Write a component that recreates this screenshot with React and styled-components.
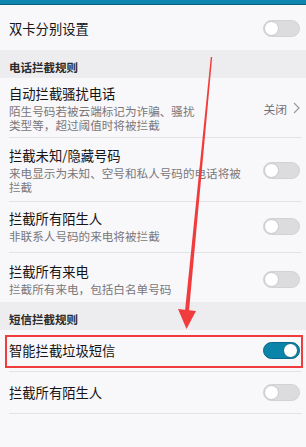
import React from "react";
import styled, { createGlobalStyle } from "styled-components";

const Global = createGlobalStyle`
  html, body { margin: 0; padding: 0; background: #f8f7fa; }
  body { font-family: "Noto Sans CJK SC", "Noto Sans", sans-serif; }
  * { box-sizing: border-box; }
`;

const Page = styled.div`
  position: relative;
  width: 306px;
  height: 447px;
  overflow: hidden;
  background: #f8f7fa;
  display: flex;
  flex-direction: column;
`;

const TopBar = styled.div`
  height: 5px;
  background: #0d86b0;
  border-bottom: 1px solid #075f80;
  flex: none;
`;

const Row = styled.div`
  display: flex;
  align-items: center;
  justify-content: space-between;
  margin: 0 4px 0 9px;
  padding: ${(p) => p.$pad || "0"};
  padding-right: 2px;
  min-height: ${(p) => p.$h || 0}px;
  border-bottom: ${(p) => (p.$divider ? "1px solid #e3e2e6" : "none")};
  flex: none;
`;

const TextCol = styled.div`
  display: flex;
  flex-direction: column;
  max-width: ${(p) => p.$w || 240}px;
`;

const Title = styled.div`
  font-size: 13.3px;
  line-height: 20px;
  color: #151515;
`;

const Sub = styled.div`
  font-size: 11.6px;
  line-height: 14px;
  color: #78787b;
`;

const Section = styled.div`
  height: 28px;
  background: #ededef;
  display: flex;
  align-items: flex-end;
  padding: 0 0 3px 9px;
  font-size: 11.5px;
  line-height: 16px;
  font-weight: 600;
  color: #2a2a2a;
  flex: none;
`;

const Track = styled.div`
  position: relative;
  width: 37px;
  height: 17px;
  border-radius: 9px;
  background: ${(p) => (p.$on ? "#0a84a8" : "#dcdcde")};
  border: 1px solid ${(p) => (p.$on ? "#07688a" : "#d2d2d4")};
  flex: none;
`;

const Knob = styled.div`
  position: absolute;
  top: 0px;
  ${(p) => (p.$on ? "right: 1px;" : "left: 0px;")}
  width: 15px;
  height: 15px;
  border-radius: 50%;
  background: #ffffff;
  border: 1px solid ${(p) => (p.$on ? "#07688a" : "#c8c8ca")};
`;

const Value = styled.div`
  display: flex;
  align-items: center;
  gap: 6px;
  font-size: 11.8px;
  color: #6f6f72;
  padding-right: 0;
`;

const Highlight = styled.div`
  position: absolute;
  left: 5px;
  top: 335px;
  width: 298px;
  height: 33px;
  border: 2px solid #f03c3c;
  pointer-events: none;
`;

const ArrowSvg = styled.svg`
  position: absolute;
  left: 0;
  top: 0;
  pointer-events: none;
`;

function Toggle({ on }) {
  return (
    <Track $on={on}>
      <Knob $on={on} />
    </Track>
  );
}

function Chevron() {
  return (
    <svg width="7" height="12" viewBox="0 0 7 12">
      <path d="M1 1 L6 6 L1 11" fill="none" stroke="#9a9a9d" strokeWidth="1.2" />
    </svg>
  );
}

export default function App() {
  return (
    <>
      <Global />
      <Page>
        <TopBar />
        <Row $h={45} $pad="2px 0 0">
          <Title>双卡分别设置</Title>
          <Toggle />
        </Row>
        <Section>电话拦截规则</Section>
        <Row $pad="6px 0 5px" $divider>
          <TextCol $w={192}>
            <Title>自动拦截骚扰电话</Title>
            <Sub>陌生号码若被云端标记为诈骗、骚扰类型等，超过阈值时将被拦截</Sub>
          </TextCol>
          <Value>
            关闭
            <Chevron />
          </Value>
        </Row>
        <Row $pad="8px 0 7px" $divider>
          <TextCol $w={240}>
            <Title>拦截未知/隐藏号码</Title>
            <Sub>来电显示为未知、空号和私人号码的电话将被拦截</Sub>
          </TextCol>
          <Toggle />
        </Row>
        <Row $pad="7px 0 9px" $divider>
          <TextCol>
            <Title>拦截所有陌生人</Title>
            <Sub>非联系人号码的来电将被拦截</Sub>
          </TextCol>
          <Toggle />
        </Row>
        <Row $pad="9px 0 6px">
          <TextCol>
            <Title>拦截所有来电</Title>
            <Sub>拦截所有来电，包括白名单号码</Sub>
          </TextCol>
          <Toggle />
        </Row>
        <Section>短信拦截规则</Section>
        <Row $h={42} $divider>
          <Title>智能拦截垃圾短信</Title>
          <Toggle on />
        </Row>
        <Row $h={42} $divider>
          <Title>拦截所有陌生人</Title>
          <Toggle />
        </Row>
        <Highlight />
        <ArrowSvg width="306" height="447" viewBox="0 0 306 447">
          <polygon
            points="210.8,57 212.2,57 189,311 185,311"
            fill="#f03c3c"
          />
          <polygon points="178,309 196,311 186.5,329" fill="#f03c3c" />
        </ArrowSvg>
      </Page>
    </>
  );
}
